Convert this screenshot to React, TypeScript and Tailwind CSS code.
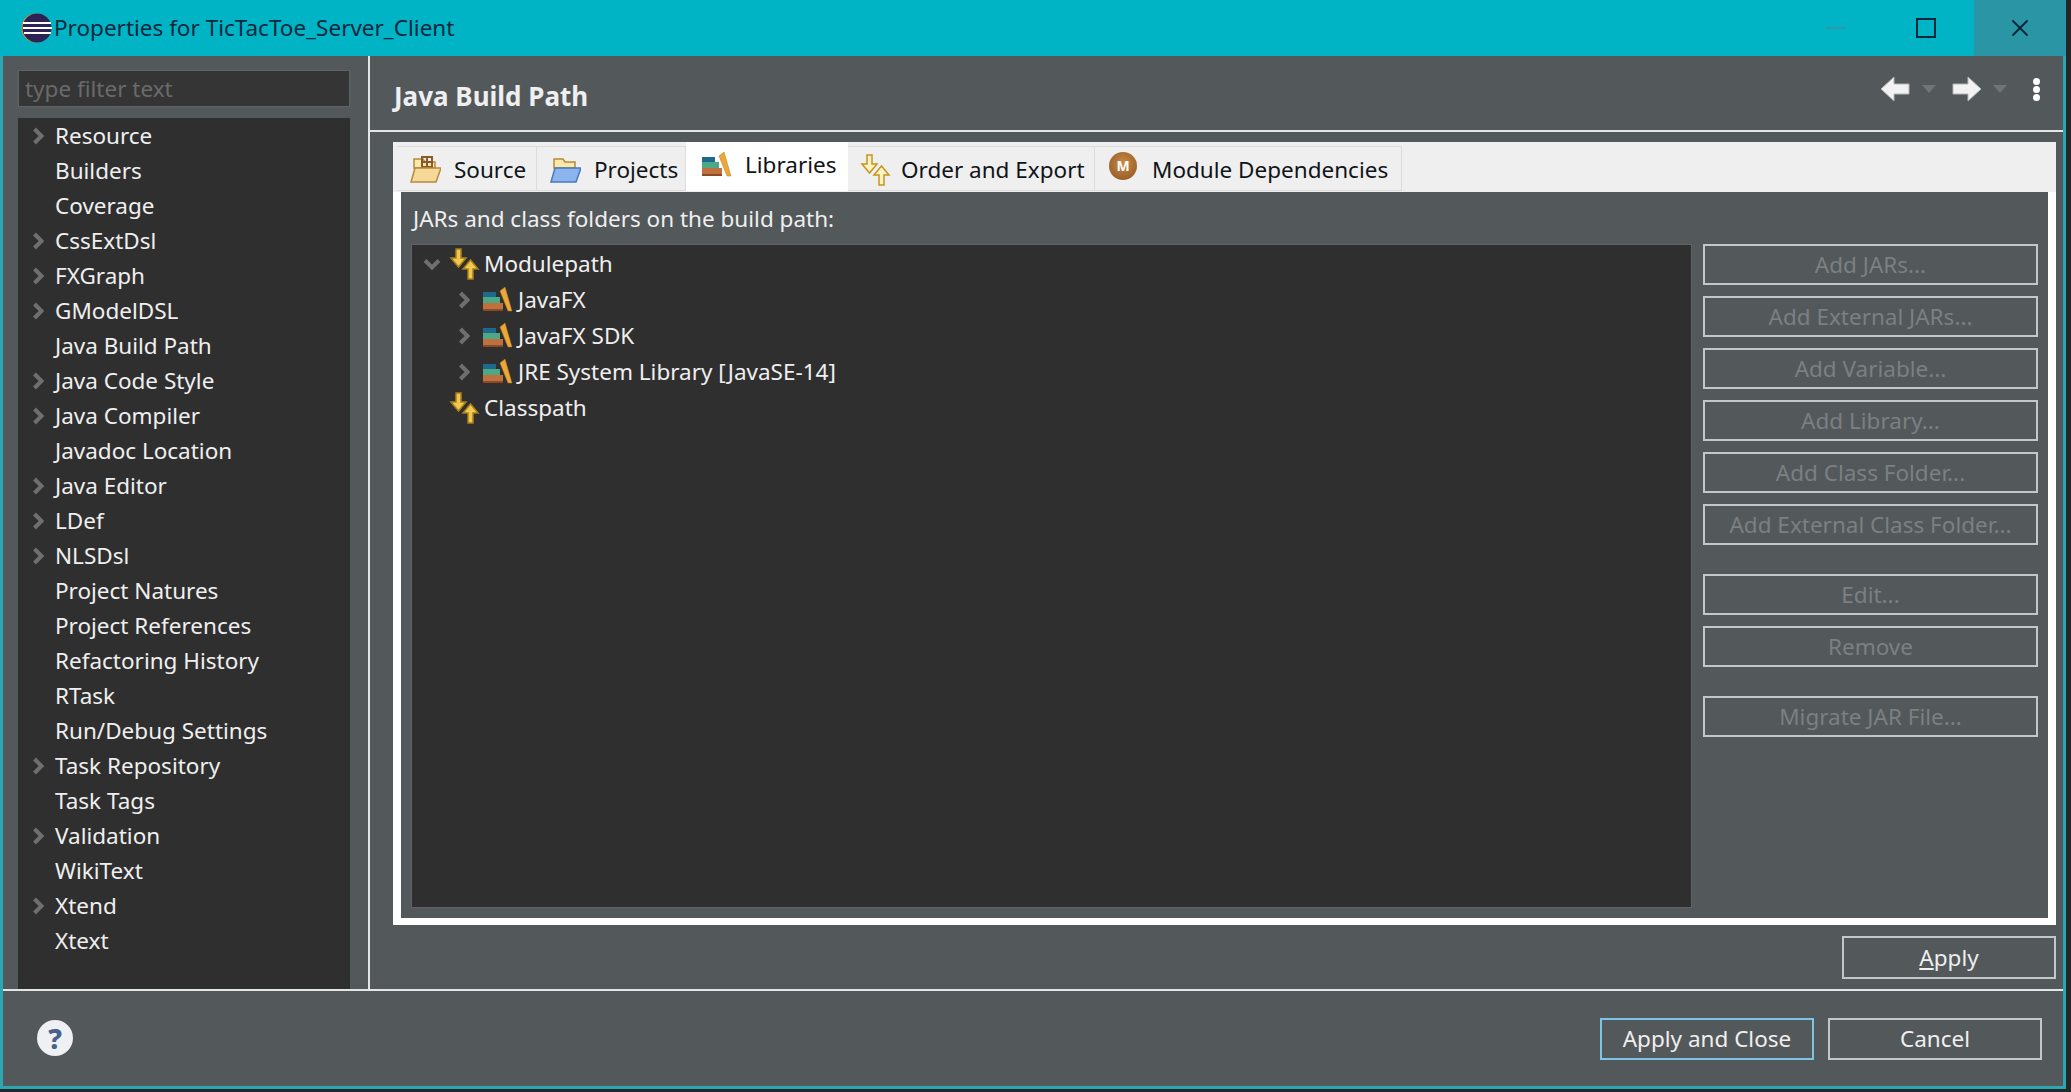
import { X } from "lucide-react";

const font = { fontFamily: '"Noto Sans", sans-serif' };

const prefs: [string, boolean][] = [
  ["Resource", true], ["Builders", false], ["Coverage", false], ["CssExtDsl", true], ["FXGraph", true],
  ["GModelDSL", true], ["Java Build Path", false], ["Java Code Style", true], ["Java Compiler", true],
  ["Javadoc Location", false], ["Java Editor", true], ["LDef", true], ["NLSDsl", true], ["Project Natures", false],
  ["Project References", false], ["Refactoring History", false], ["RTask", false], ["Run/Debug Settings", false],
  ["Task Repository", true], ["Task Tags", false], ["Validation", true], ["WikiText", false], ["Xtend", true], ["Xtext", false],
];

function EclipseLogo() {
  return (
    <svg width="32" height="32" viewBox="0 0 32 32">
      <circle cx="16" cy="16" r="14.5" fill="#f7941e" />
      <circle cx="17" cy="16" r="14.5" fill="#2c2255" />
      <path d="M3 10h28v2H3zM3 15h29v2H3zM4 20h27v2H4z" fill="#fff" />
    </svg>
  );
}

function Chevron() {
  return (
    <svg width="13" height="18" viewBox="0 0 13 18">
      <path d="M2.5 2l7 7-7 7" fill="none" stroke="#6f6f6f" strokeWidth="4" />
    </svg>
  );
}

function LibIcon() {
  return (
    <svg width="31" height="31" viewBox="0 0 31 31">
      <path d="M1 7h13v5H1z" fill="#1d6a8c" />
      <path d="M1 12h17v6H1z" fill="#4ea888" />
      <path d="M1 18h20v8H1z" fill="#c0703c" />
      <path d="M1 24h20v2H1z" fill="#8a4a26" />
      <path d="M18 6l5-4 7 24h-4z" fill="#eba73a" stroke="#b97a1f" strokeWidth=".5" />
    </svg>
  );
}

function UpDownIcon({ solid = true }: { solid?: boolean }) {
  const fill = solid ? "#efc94c" : "#fff3c8";
  const line = solid ? "#a97f1c" : "#c8941c";
  return (
    <svg width="32" height="32" viewBox="0 0 32 32">
      <path d="M7 1h5v9h5l-7.500 9L2 10h5z" fill={fill} stroke={line} strokeWidth="1.5" />
      <path d="M19 31V21h-5l7.500-9 7.500 9h-5v10z" fill={fill} stroke={line} strokeWidth="1.5" />
    </svg>
  );
}

function FolderIcon({ blue }: { blue?: boolean }) {
  return (
    <svg width="32" height="28" viewBox="0 0 32 28">
      <path d="M5 3h9l2 3h10v6H5z" fill="#fbe9a9" stroke="#b58a3c" strokeWidth="1.5" />
      {!blue && <path d="M13 1h10v10H13z" fill="none" stroke="#8a5a2a" strokeWidth="2" />}
      {!blue && <path d="M18 1v10M13 6h10" stroke="#8a5a2a" strokeWidth="2" />}
      <path d="M2 26l4-14h26l-5 14z" fill={blue ? "#8cb4ee" : "#f6d998"} stroke={blue ? "#4a78c0" : "#b58a3c"} strokeWidth="1.5" />
    </svg>
  );
}

function ModuleIcon() {
  return (
    <div className="mb-[8px] flex h-[28px] w-[28px] items-center justify-center rounded-full bg-[radial-gradient(circle_at_50%_40%,#c98a45,#8a5320)] text-[14px] font-bold leading-none text-white">
      M
    </div>
  );
}

function HelpIcon() {
  return (
    <div className="mb-[2px] flex h-9 w-9 items-center justify-center rounded-full bg-[#eef0f3] text-[28px] font-extrabold leading-none text-[#48628c]">
      ?
    </div>
  );
}

function NavArrow({ dir }: { dir: "left" | "right" }) {
  return (
    <svg width="30" height="26" viewBox="0 0 30 26" className={dir === "right" ? "-scale-x-100" : ""}>
      <path d="M14 1L1 13l13 12v-7h15V8H14z" fill="#f2f2f2" stroke="#b5b5b5" strokeWidth="1" />
    </svg>
  );
}

function Drop() {
  return <div className="h-0 w-0 border-x-[7px] border-t-[8px] border-x-transparent border-t-[#6f7477]" />;
}

function Tab({ label, icon, className }: { label: string; icon: React.ReactNode; className: string }) {
  return (
    <div className={`flex shrink-0 text-[#101418] ${className}`}>
      <span className="flex h-8 w-8 shrink-0 items-center justify-center">{icon}</span>
      <span className="whitespace-nowrap">{label}</span>
    </div>
  );
}

const idleTab = "mt-1 h-[45px] items-center border-r border-b border-t border-[#dcdcdc] pl-3 pt-[2px]";

function SideBtn({ label, className = "" }: { label: string; className?: string }) {
  return (
    <div className={`flex h-[41px] items-center justify-center border-2 border-[#c4c7c8] pt-[1px] text-[#7b8082] ${className}`}>
      {label}
    </div>
  );
}

function LibRow({ label }: { label: string }) {
  return (
    <div className="flex h-9 items-center pl-[46px]">
      <Chevron />
      <span className="ml-[11px] flex w-[36px] shrink-0"><LibIcon /></span>
      <span className="whitespace-nowrap">{label}</span>
    </div>
  );
}

export default function App() {
  return (
    <div className="flex h-[1092px] w-[2071px] flex-col overflow-hidden bg-[#22282a] pb-[3px] pr-[5px] text-[22.5px] text-[#efefef]" style={font}>
      <div className="flex h-[56px] shrink-0 items-center bg-[#00b4c5] pl-[20px] text-[#05283c]">
        <EclipseLogo />
        <span className="ml-[2px] whitespace-nowrap">Properties for TicTacToe_Server_Client</span>
        <div className="ml-auto flex h-full items-center">
          <div className="flex h-full w-[92px] items-center justify-center">
            <div className="h-[2px] w-5 bg-[#2d9bab]" />
          </div>
          <div className="flex h-full w-[92px] items-center justify-center pr-[4px]">
            <div className="h-5 w-5 border-2 border-[#05283c]" />
          </div>
          <div className="flex h-full w-[92px] items-center justify-center bg-[#2a95a5]">
            <X size={28} strokeWidth={1.6} className="text-[#05283c]" />
          </div>
        </div>
      </div>

      <div className="flex min-h-0 flex-1 flex-col border-b-[3px] border-l-[3px] border-r-[3px] border-[#2aa7b3] bg-[#53585b]">
        <div className="flex min-h-0 flex-1 border-b-2 border-[#e4e6e6]">
          <aside className="flex w-[367px] shrink-0 flex-col border-r-2 border-[#e4e6e6] pl-[15px] pr-[18px] pt-[14px]">
            <div className="flex h-[37px] shrink-0 items-center border border-[#5e6365] bg-[#353535] pl-[6px] text-[#6a6a6a]">type filter text</div>
            <div className="mt-[11px] min-h-0 flex-1 bg-[#2f2f2f]">
              {prefs.map(([name, more]) => (
                <div key={name} className="flex h-[35px] items-center">
                  <span className="flex w-[37px] pl-[14px]">{more && <Chevron />}</span>
                  <span className="whitespace-nowrap">{name}</span>
                </div>
              ))}
            </div>
          </aside>

          <main className="flex min-w-0 flex-1 flex-col">
            <div className="flex h-[76px] shrink-0 items-center justify-between border-b-2 border-[#e4e6e6] pl-[24px] pr-[23px]">
              <span className="mt-[6px] text-[26px] font-bold">Java Build Path</span>
              <div className="mb-[8px] flex items-center">
                <NavArrow dir="left" />
                <span className="ml-[12px]"><Drop /></span>
                <span className="ml-[16px]"><NavArrow dir="right" /></span>
                <span className="ml-[11px]"><Drop /></span>
                <span className="ml-[26px] flex flex-col gap-[1px]">
                  <span className="h-[7px] w-[7px] rounded-full bg-white" />
                  <span className="h-[7px] w-[7px] rounded-full bg-white" />
                  <span className="h-[7px] w-[7px] rounded-full bg-white" />
                </span>
              </div>
            </div>

            <div className="ml-[23px] mr-[7px] mt-[10px] flex h-[783px] flex-col bg-white">
              <div className="flex h-[50px] shrink-0 bg-[#efefef] pl-[4px]">
                <Tab label="Source" icon={<FolderIcon />} className={`w-[140px] gap-[13px] ${idleTab}`} />
                <Tab label="Projects" icon={<FolderIcon blue />} className={`w-[149px] gap-[13px] ${idleTab}`} />
                <Tab label="Libraries" icon={<LibIcon />} className="h-[49px] w-[162px] items-start gap-[13px] bg-white pl-[14px] pt-[7px] leading-[32px]" />
                <Tab label="Order and Export" icon={<UpDownIcon solid={false} />} className={`w-[247px] gap-[9px] ${idleTab}`} />
                <Tab label="Module Dependencies" icon={<ModuleIcon />} className={`w-[307px] gap-[13px] ${idleTab}`} />
              </div>
              <div className="mx-[8px] mb-[7px] flex min-h-0 flex-1 flex-col bg-[#53585b] px-[10px] pb-[10px]">
                <div className="flex h-[52px] shrink-0 items-center pl-[2px] pt-[2px]">JARs and class folders on the build path:</div>
                <div className="flex min-h-0 flex-1 gap-[11px]">
                  <div className="min-w-0 flex-1 border border-[#5e6365] bg-[#2f2f2f] pt-[1px]">
                    <div className="flex h-9 items-center pl-[11px]">
                      <svg width="18" height="13" viewBox="0 0 18 13">
                        <path d="M2 2.500l7 7 7-7" fill="none" stroke="#6f6f6f" strokeWidth="4" />
                      </svg>
                      <span className="ml-[8px] flex w-[35px] shrink-0"><UpDownIcon /></span>
                      <span>Modulepath</span>
                    </div>
                    <LibRow label="JavaFX" />
                    <LibRow label="JavaFX SDK" />
                    <LibRow label="JRE System Library [JavaSE-14]" />
                    <div className="flex h-9 items-center pl-[37px]">
                      <span className="flex w-[35px] shrink-0"><UpDownIcon /></span>
                      <span>Classpath</span>
                    </div>
                  </div>
                  <div className="flex w-[335px] shrink-0 flex-col">
                    <div className="flex flex-col gap-[11px]">
                      <SideBtn label="Add JARs..." />
                      <SideBtn label="Add External JARs..." />
                      <SideBtn label="Add Variable..." />
                      <SideBtn label="Add Library..." />
                      <SideBtn label="Add Class Folder..." />
                      <SideBtn label="Add External Class Folder..." />
                    </div>
                    <div className="mt-[29px] flex flex-col gap-[11px]">
                      <SideBtn label="Edit..." />
                      <SideBtn label="Remove" />
                    </div>
                    <SideBtn label="Migrate JAR File..." className="mt-[29px]" />
                  </div>
                </div>
              </div>
            </div>

            <div className="mr-[7px] mt-[11px] flex justify-end">
              <div className="flex h-[43px] w-[214px] items-center justify-center border-2 border-[#c4c7c8]">
                <span><span className="underline">A</span>pply</span>
              </div>
            </div>
          </main>
        </div>

        <div className="flex h-[95px] shrink-0 items-center pl-[34px] pr-[21px]">
          <HelpIcon />
          <div className="ml-auto flex gap-[14px]">
            <div className="flex h-[42px] w-[214px] items-center justify-center border-2 border-[#7cc4e8] pt-[1px]">Apply and Close</div>
            <div className="flex h-[42px] w-[214px] items-center justify-center border-2 border-[#c4c7c8] pt-[1px]">Cancel</div>
          </div>
        </div>
      </div>
    </div>
  );
}
